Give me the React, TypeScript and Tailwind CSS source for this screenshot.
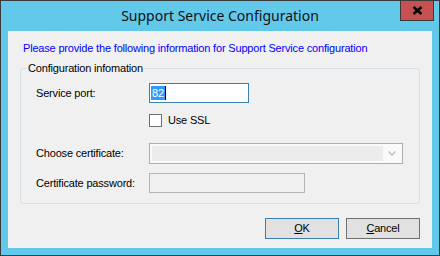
export default function App() {
  return (
    <div className="w-[440px] h-[256px] flex flex-col bg-[#63c9ea] border border-[#3a3a3a] font-['Liberation_Sans',Arial,sans-serif] text-[11px] leading-[13px] tracking-[-0.18px] text-black">
      {/* title bar */}
      <div className="h-[30px] grid grid-cols-[1fr_auto_1fr]">
        <div />
        <div className="self-center font-['Noto_Sans',sans-serif] text-[14px] leading-[20px] tracking-normal text-[#111]">
          Support Service Configuration
        </div>
        <div className="flex justify-end">
          <button className="-mt-px mr-[5px] w-[34px] h-[21px] bg-[#c75050] border border-[#3a3a3a] flex items-center justify-center">
            <svg width="11" height="9" viewBox="0 0 11 9">
              <path d="M1.5 1 L9.5 8 M9.5 1 L1.5 8" stroke="#000" strokeWidth="2.4" />
            </svg>
          </button>
        </div>
      </div>

      {/* client area */}
      <div className="flex-1 mx-[7px] mb-[7px] bg-[#f0f0f0] pt-[11px] pl-[12px]">
        <div className="ml-[3px] text-[#0000ff]">
          Please provide the following information for Support Service configuration
        </div>

        <fieldset className="mt-[7px] w-[400px] border border-[#d5dfe5] rounded-[3px] pb-[10px]">
          <legend className="ml-[6px] px-px">Configuration infomation</legend>
          <div className="px-[15px] pt-[8px] flex flex-col">
            <div className="flex items-center">
              <span className="w-[113px]">Service port:</span>
              <div className="w-[100px] h-[20px] border border-[#3c7fb1] bg-white flex items-center pl-[1px]">
                <span className="bg-[#3399ff] text-white px-px leading-[14px]">82</span>
                <span className="w-px h-[14px] bg-black" />
              </div>
            </div>

            <div className="flex items-center mt-[11px] ml-[113px]">
              <span className="w-[13px] h-[13px] border border-[#707070] bg-white" />
              <span className="ml-[6px]">Use SSL</span>
            </div>

            <div className="flex items-center mt-[16px]">
              <span className="w-[113px]">Choose certificate:</span>
              <div className="w-[254px] h-[21px] border border-[#adadad] bg-[#fafafa] p-[2px] flex">
                <div className="flex-1 bg-[#ececec]" />
                <div className="w-[17px] flex items-center justify-center">
                  <svg width="8" height="5" viewBox="0 0 8 5">
                    <path d="M0.5 0.5 L4 4 L7.5 0.5" stroke="#bcbcbc" strokeWidth="1.5" fill="none" />
                  </svg>
                </div>
              </div>
            </div>

            <div className="flex items-center mt-[9px]">
              <span className="w-[113px]">Certificate password:</span>
              <div className="w-[156px] h-[20px] border border-[#b4b4b4] bg-[#f0f0f0]" />
            </div>
          </div>
        </fieldset>

        <div className="w-[400px] mt-[14px] flex justify-end gap-[7px]">
          <button className="w-[74px] h-[21px] bg-[#e1e1e1] border border-[#3c7fb1] flex items-center justify-center">
            <span><span className="underline">O</span>K</span>
          </button>
          <button className="w-[74px] h-[21px] bg-[#e1e1e1] border border-[#707070] flex items-center justify-center">
            <span><span className="underline">C</span>ancel</span>
          </button>
        </div>
      </div>
    </div>
  );
}
